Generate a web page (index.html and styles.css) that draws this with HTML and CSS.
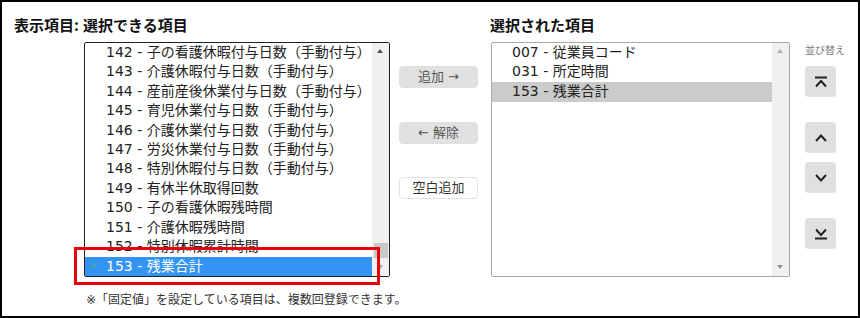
FILE: index.html
```html
<!DOCTYPE html>
<html lang="ja">
<head>
    <meta charset="UTF-8">
    <meta name="viewport" content="width=device-width, initial-scale=1.0">
    <title>表示項目の選択</title>
    <link rel="stylesheet" href="styles.css">
</head>
<body>
    <div class="frame">
        <div class="panel">
            <div class="label">表示項目:</div>
            <div class="title">選択できる項目</div>
            <div></div>
            <div class="title">選択された項目</div>
            <div></div>

            <div></div>
            <!-- 選択できる項目 -->
            <div class="list-wrap">
                <div class="listbox dark">
                    <div class="options">
                        <div class="option">142 - 子の看護休暇付与日数（手動付与）</div>
                        <div class="option">143 - 介護休暇付与日数（手動付与）</div>
                        <div class="option">144 - 産前産後休業付与日数（手動付与）</div>
                        <div class="option">145 - 育児休業付与日数（手動付与）</div>
                        <div class="option">146 - 介護休業付与日数（手動付与）</div>
                        <div class="option">147 - 労災休業付与日数（手動付与）</div>
                        <div class="option">148 - 特別休暇付与日数（手動付与）</div>
                        <div class="option">149 - 有休半休取得回数</div>
                        <div class="option">150 - 子の看護休暇残時間</div>
                        <div class="option">151 - 介護休暇残時間</div>
                        <div class="option">152 - 特別休暇累計時間</div>
                        <div class="option selected"><span class="check">✔</span>153 - 残業合計</div>
                    </div>
                    <div class="scrollbar">
                        <span class="arrow up dark-arrow"></span>
                        <span class="thumb"></span>
                        <span class="arrow down"></span>
                    </div>
                </div>
                <div class="highlight"></div>
            </div>

            <!-- 追加・解除 -->
            <div class="moves">
                <button class="btn gray first">追加 →</button>
                <button class="btn gray second">← 解除</button>
                <button class="btn white third">空白追加</button>
            </div>

            <!-- 選択された項目 -->
            <div class="listbox light">
                <div class="options">
                    <div class="option">007 - 従業員コード</div>
                    <div class="option">031 - 所定時間</div>
                    <div class="option current">153 - 残業合計</div>
                </div>
                <div class="scrollbar">
                    <span class="arrow up"></span>
                    <span class="arrow down bottom"></span>
                </div>
            </div>

            <!-- 並び替え -->
            <div class="sort">
                <div class="sort-label">並び替え</div>
                <button class="sq s1">
                    <svg width="16" height="14" viewBox="0 0 16 14"><path d="M2 2.5h12M3 11.5l5-5.5 5 5.5" fill="none" stroke="#222" stroke-width="2"/></svg>
                </button>
                <button class="sq s2">
                    <svg width="16" height="14" viewBox="0 0 16 14"><path d="M3 10l5-5.5 5 5.5" fill="none" stroke="#222" stroke-width="2"/></svg>
                </button>
                <button class="sq s3">
                    <svg width="16" height="14" viewBox="0 0 16 14"><path d="M3 4l5 5.5 5-5.5" fill="none" stroke="#222" stroke-width="2"/></svg>
                </button>
                <button class="sq s4">
                    <svg width="16" height="14" viewBox="0 0 16 14"><path d="M3 2.5l5 5.5 5-5.5M2 11.5h12" fill="none" stroke="#222" stroke-width="2"/></svg>
                </button>
            </div>
        </div>

        <p class="note">※「固定値」を設定している項目は、複数回登録できます。</p>
    </div>
</body>
</html>
```

FILE: styles.css
```css
body {
    margin: 0;
    font-family: "DejaVu Sans", "Noto Sans CJK JP", sans-serif;
    color: #222;
    background: #fff;
}
.frame {
    width: 860px;
    height: 318px;
    box-sizing: border-box;
    border: 2px solid #000;
    padding: 13px 0 0 12px;
}
.panel {
    display: grid;
    grid-template-columns: 70px 306px 101px 299px auto;
    grid-template-rows: 20px 235px;
    row-gap: 7px;
}
.label, .title {
    font-family: "Noto Sans CJK JP", sans-serif;
    font-size: 15px;
    font-weight: bold;
    line-height: 20px;
    color: #111;
}
.title {
    margin-left: -1px;
}

/* リストボックス */
.list-wrap {
    position: relative;
}
.listbox {
    display: flex;
    height: 235px;
    box-sizing: border-box;
    border-radius: 2px;
    overflow: hidden;
    background: #fff;
}
.listbox.dark {
    border: 1px solid #222;
}
.listbox.light {
    border: 1px solid #a8a8a8;
}
.options {
    flex: 1;
}
.option {
    position: relative;
    height: 19.4px;
    line-height: 19.4px;
    font-size: 14px;
    padding-left: 21px;
    white-space: nowrap;
    color: #222;
}
.light .option {
    padding-left: 20px;
}
.option.selected {
    background: #3394f5;
    color: #fff;
    height: 20px;
    margin-top: 1px;
}
.check {
    position: absolute;
    left: 5px;
    top: 0;
    font-size: 9px;
    color: #4fae74;
}
.option.current {
    background: #cbcbcb;
    height: 20px;
}
.scrollbar {
    position: relative;
    width: 17px;
    background: #f0f0f0;
}
.arrow {
    position: absolute;
    left: 5px;
    width: 0;
    height: 0;
    border-left: 3.5px solid transparent;
    border-right: 3.5px solid transparent;
}
.arrow.up {
    top: 6px;
    border-bottom: 4px solid #b0b0b0;
}
.arrow.up.dark-arrow {
    border-bottom-color: #505050;
}
.arrow.down {
    bottom: 7px;
    border-top: 4px solid #a0a0a0;
}
.arrow.down.bottom {
    bottom: 7px;
    border-top-color: #909090;
}
.thumb {
    position: absolute;
    left: 2px;
    right: 1px;
    top: 200px;
    height: 15px;
    background: #c8c8c8;
}
.highlight {
    position: absolute;
    left: -10px;
    top: 205px;
    width: 306px;
    height: 38px;
    box-sizing: border-box;
    border: 3px solid #e8000b;
}

/* 追加・解除ボタン */
.moves {
    position: relative;
    display: flex;
    flex-direction: column;
    align-items: flex-start;
    padding-left: 9px;
}
.btn {
    width: 79px;
    height: 22px;
    font-family: inherit;
    font-size: 13px;
    line-height: 20px;
    border-radius: 4px;
    padding: 0;
    color: #555;
}
.btn.gray {
    background: #e1e1e1;
    border: 1px solid #e1e1e1;
}
.btn.white {
    background: #fff;
    border: 1px solid #e2e2e2;
    color: #333;
}
.first { margin-top: 24px; }
.second { margin-top: 34px; }
.third { margin-top: 33px; }

/* 並び替え */
.sort {
    display: flex;
    flex-direction: column;
    align-items: flex-start;
    padding-left: 15px;
}
.sort-label {
    font-size: 10px;
    line-height: 14px;
    color: #777;
    margin-top: 2px;
}
.sq {
    width: 31px;
    height: 31px;
    border: none;
    border-radius: 4px;
    background: #e0e0e0;
    padding: 0;
    display: flex;
    align-items: center;
    justify-content: center;
}
.s1 { margin-top: 8px; }
.s2 { margin-top: 25px; }
.s3 { margin-top: 9px; }
.s4 { margin-top: 25px; }

.note {
    margin: 15px 0 0 72px;
    font-size: 12px;
    line-height: 16px;
    color: #333;
}
```
